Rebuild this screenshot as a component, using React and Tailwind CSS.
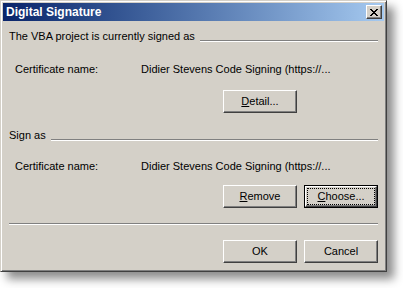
import React from 'react';

function Btn({ children, isDefault }) {
  if (isDefault) {
    return (
      <div className="w-[74px] h-[23px] border border-black">
        <div className="w-full h-full flex items-center justify-center border-t border-l border-t-white border-l-white border-b border-r border-b-[#404040] border-r-[#404040] shadow-[inset_-1px_-1px_0_#808080]">
          <div className="w-[66px] h-[15px] flex items-center justify-center outline-1 outline-dotted outline-black">
            {children}
          </div>
        </div>
      </div>
    );
  }
  return (
    <div className="w-[74px] h-[23px] flex items-center justify-center border-t border-l border-t-white border-l-white border-b border-r border-b-[#404040] border-r-[#404040] shadow-[inset_-1px_-1px_0_#808080]">
      {children}
    </div>
  );
}

function GroupHeader({ label }) {
  return (
    <div className="flex items-center h-[13px]">
      <span className="pr-[5px] whitespace-nowrap">{label}</span>
      <div className="flex-1 mt-[9px] border-t border-t-[#808080] border-b border-b-white" />
    </div>
  );
}

function CertRow() {
  return (
    <div className="flex h-[13px] pl-[6px]">
      <span className="w-[126px]">Certificate name:</span>
      <span className="whitespace-nowrap">Didier Stevens Code Signing (https://...</span>
    </div>
  );
}

export default function App() {
  return (
    <div className="w-[403px] h-[288px] bg-white font-['Liberation_Sans',Arial,sans-serif] text-[11px] leading-[13px] text-black">
      <div className="w-[387px] h-[272px] bg-[#d4d0c8] border border-t-[#d4d0c8] border-l-[#d4d0c8] border-b-[#404040] border-r-[#404040] shadow-[inset_1px_1px_0_#fff,inset_-1px_-1px_0_#808080,7px_7px_9px_rgba(0,0,0,0.45)] p-[2px] flex flex-col">
        {/* Title bar */}
        <div className="h-[18px] flex items-center justify-between bg-gradient-to-r from-[#0a246a] to-[#a6caf0] pl-[3px] pr-[2px]">
          <span className="text-white font-bold text-[12px]">Digital Signature</span>
          <div className="w-[16px] h-[14px] bg-[#d4d0c8] flex items-center justify-center border-t border-l border-t-white border-l-white border-b border-r border-b-[#404040] border-r-[#404040] shadow-[inset_-1px_-1px_0_#808080]">
            <svg width="8" height="7" viewBox="0 0 8 7" shapeRendering="crispEdges">
              <path d="M0 0h2v1h-2zM6 0h2v1h-2zM1 1h2v1h-2zM5 1h2v1h-2zM2 2h4v1h-4zM3 3h2v1h-2zM2 4h4v1h-4zM1 5h2v1h-2zM5 5h2v1h-2zM0 6h2v1h-2zM6 6h2v1h-2z" fill="#000" />
            </svg>
          </div>
        </div>

        {/* Body */}
        <div className="flex flex-col pl-[6px] pr-[6px] pt-[9px]">
          <GroupHeader label="The VBA project is currently signed as" />
          <div className="mt-[20px]">
            <CertRow />
          </div>
          <div className="mt-[14px] flex pl-[214px]">
            <Btn>
              <span><span className="underline">D</span>etail...</span>
            </Btn>
          </div>
          <div className="mt-[16px]">
            <GroupHeader label="Sign as" />
          </div>
          <div className="mt-[18px]">
            <CertRow />
          </div>
          <div className="mt-[12px] flex gap-[7px] pl-[214px]">
            <Btn>
              <span><span className="underline">R</span>emove</span>
            </Btn>
            <Btn isDefault>
              <span><span className="underline">C</span>hoose...</span>
            </Btn>
          </div>
          <div className="mt-[15px] border-t border-t-[#808080] border-b border-b-white" />
          <div className="mt-[15px] flex gap-[7px] pl-[214px]">
            <Btn>OK</Btn>
            <Btn>Cancel</Btn>
          </div>
        </div>
      </div>
    </div>
  );
}
